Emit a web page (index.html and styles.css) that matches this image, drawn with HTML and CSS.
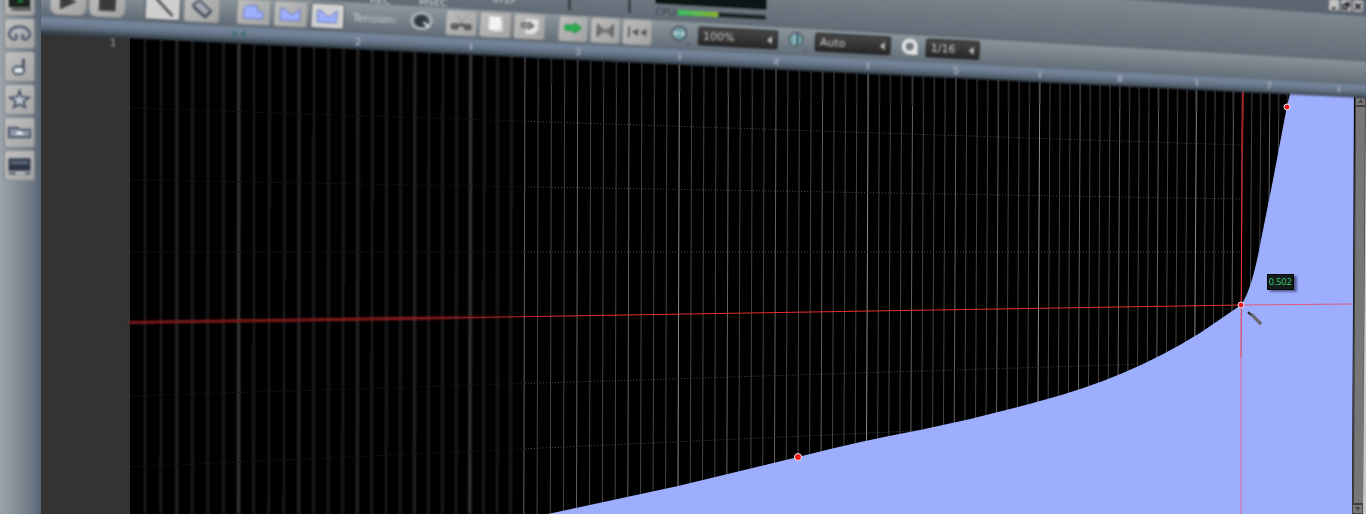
FILE: index.html
```html
<!DOCTYPE html>
<html lang="en">
<head>
<meta charset="utf-8">
<title>Automation editor</title>
<link rel="stylesheet" href="styles.css">
</head>
<body>
<div class="app">
  <nav class="sidebar" aria-label="Editors">
    <button class="side-btn" aria-label="Wave"><svg viewBox="0 0 30 30"><rect x="4" y="6" width="22" height="16" fill="#1c221e"/><path d="M13 16h4v-3h3" stroke="#20903a" stroke-width="2" fill="none"/><path d="M7 24h20" stroke="#555" stroke-width="3"/></svg></button>
    <button class="side-btn" aria-label="Controller"><svg viewBox="0 0 30 30"><path d="M8 21C0 16 6 8 15 8s15 8 7 13c-4 1-6-3-2-5M8 21c4 1 6-3 2-5" fill="none" stroke="#5d6677" stroke-width="3"/><path d="M7 13q8-6 16 0" fill="none" stroke="#a9afbb"/></svg></button>
    <button class="side-btn" aria-label="Notes"><svg viewBox="0 0 30 30"><path d="M19 7v13" stroke="#4b5567" stroke-width="3"/><ellipse cx="14" cy="19" rx="6" ry="4" fill="#dde3ea" stroke="#4b5567" stroke-width="2"/></svg></button>
    <button class="side-btn" aria-label="Favourites"><svg viewBox="0 0 30 30"><path d="M15 6l2 6 8 1-6 4 2 6-6-3-6 3 2-6-6-4 8-1z" fill="#bdc5d0" stroke="#4b5567" stroke-width="2"/></svg></button>
    <button class="side-btn" aria-label="Folder"><svg viewBox="0 0 30 30"><path d="M4 10h9l2 2h11v8H4z" fill="#8c97a8" stroke="#4b5567" stroke-width="2"/><path d="M15 13l5 4H10z" fill="#f0f4f8"/></svg></button>
    <button class="side-btn" aria-label="Screen"><svg viewBox="0 0 30 30"><rect x="4" y="8" width="22" height="12" fill="#2c3442" stroke="#4b5567"/><path d="M6 10h18v4H6z" fill="#596579"/><path d="M4 23h22" stroke="#626b79" stroke-width="3"/><path d="M11 23h10" stroke="#c8cdd2" stroke-width="2"/></svg></button>
  </nav>
  <main class="editor">
    <svg class="scene" viewBox="41 0 1325 514" preserveAspectRatio="none" role="img" aria-label="Automation curve">
      <defs>
        <linearGradient id="gPanel" gradientUnits="userSpaceOnUse" x1="1100" y1="-2" x2="1097" y2="46"><stop offset="0" stop-color="#7d888f"/><stop offset="1" stop-color="#636c77"/></linearGradient>
        <linearGradient id="gTools" gradientUnits="userSpaceOnUse" x1="760" y1="27" x2="758.6" y2="53"><stop offset="0" stop-color="#8a959b"/><stop offset="1" stop-color="#626d78"/></linearGradient>
        <linearGradient id="gRuler" gradientUnits="userSpaceOnUse" x1="700" y1="50" x2="699.25" y2="65"><stop offset="0" stop-color="#75859c"/><stop offset=".4" stop-color="#708095"/><stop offset=".75" stop-color="#566473"/><stop offset="1" stop-color="#36414c"/></linearGradient>
        <linearGradient id="gCpu" x1="0" x2="1" y1="0" y2="0"><stop offset="0" stop-color="#35c364"/><stop offset="1" stop-color="#8db52f"/></linearGradient>
        <linearGradient id="gRed" gradientUnits="userSpaceOnUse" x1="130" y1="0" x2="530" y2="0"><stop offset="0" stop-color="#7e1a1a"/><stop offset=".7" stop-color="#8c1c1e"/><stop offset="1" stop-color="#8c1c1e" stop-opacity="0"/></linearGradient>
        <linearGradient id="gRedLine" gradientUnits="userSpaceOnUse" x1="380" y1="0" x2="560" y2="0"><stop offset="0" stop-color="#e82c2c" stop-opacity="0"/><stop offset="1" stop-color="#e82c2c"/></linearGradient>
        <filter id="soft" filterUnits="userSpaceOnUse" x="0" y="-20" width="1400" height="560"><feGaussianBlur stdDeviation="1"/></filter>
        <filter id="slight" filterUnits="userSpaceOnUse" x="0" y="-20" width="1400" height="560"><feGaussianBlur stdDeviation=".8"/></filter>
      </defs>
      <rect x="41" width="1325" height="514" fill="#000"/>
      <rect x="41" width="89" height="514" fill="#333"/>
      <g id="grid"></g>
      <path d="M548 514L678 486L798 457Q860 441 920 430Q980 418 1040 401Q1128 378 1200 333L1241 305Q1252 290 1261 240L1273 180L1287 106L1291 90H1354L1352 514z" fill="#9eaeff"/>
      <path d="M129 321L530 315L530 318L129 324z" fill="url(#gRed)" filter="url(#slight)"/>
      <path d="M380 319L1241 305" stroke="url(#gRedLine)"/>
      <path d="M1241 305L1352 304" stroke="#e0567c"/>
      <path d="M1243 90L1242 150" stroke="#a52329" stroke-width="2"/>
      <path d="M1242 150L1241 357" stroke="#f03030" stroke-width="1"/>
      <path d="M1241 357V514" stroke="#dc6a96"/>
      <g fill="#f01818" stroke="#e4e8ff" stroke-width="1"><circle cx="798" cy="457" r="3.500"/><circle cx="1241" cy="305" r="3"/><circle cx="1287" cy="107" r="3"/></g>
      <path d="M1248 312l3 3" stroke="#222" stroke-width="2"/><path d="M1251 314l10 10" stroke="#555" stroke-width="3"/><path d="M1252 315l8 8" stroke="#88887f" stroke-width="1"/>
      <g>
        <path d="M1355 96L1352 514H1366V96z" fill="#414141"/>
        <path d="M1356 107h9l-2 396h-9z" fill="#767676"/>
        <path d="M1356 98h9v7h-9zM1353 505h9v8h-9z" fill="#777"/>
        <path d="M1358 103h5l-2-4zM1355 507h5l-2 4z" fill="#444"/>
        <path d="M1366 96L1363 514H1366z" fill="#c8c8c8"/>
      </g>
      <g filter="url(#slight)">
        <path d="M20 -10H1386V99L41 34L20 33z" fill="url(#gRuler)"/>
        <path d="M20 -10H1386V86L41 17L20 16z" fill="url(#gTools)"/>
        <path d="M240 -4L1386 63V-20H240z" fill="url(#gPanel)"/>
        <path d="M1120 -1L1386 18V-10H1120z" fill="#5b6572"/>
        <path d="M568 -4h3v14h-3zM628 -4h3v17h-3z" fill="#343a42"/>
        <path d="M655 -4H767V8q0 2-3 2L658 4q-3 0-3-2z" fill="#111715"/>
        <path d="M677 10L766 15V20L677 15z" fill="#1f2628"/>
        <path d="M678 10L718 12V17L678 15z" fill="url(#gCpu)"/>
        <text class="lcd-label dark" x="655" y="15" transform="rotate(3 655 15)">CPU</text>
        <text class="lcd-label" x="370" y="3" transform="rotate(3 370 3)">REC</text>
        <text class="lcd-label" x="419" y="5" transform="rotate(3 419 5)">MSEC</text>
        <text class="lcd-label" x="492" y="2" transform="rotate(3 492 2)">STEP</text>
        <g class="ruler-label"><text x="113" y="46">1</text><text x="358" y="45">2</text><text x="578" y="55">3</text><text x="776" y="65">4</text><text x="956" y="74">5</text><text x="1120" y="82">6</text><text x="1269" y="89">7</text></g>
        <path d="M471 43v7M680 53v7M868 62v7M1040 71v7M1197 79v7M1339 86v6" stroke="#98a3b1" stroke-width="2"/>
        <path d="M232 31l4 3-4 3M246 31l-4 3 4 3" stroke="#2f6f62" stroke-width="2" fill="none"/>
      </g>
    </svg>
    <output class="value-tip">0.502</output>
    <div class="toolbar">
      <div class="group large">
        <button class="tool" aria-label="Play"><svg viewBox="0 0 30 26"><path d="M6 4l18 8L6 21z" fill="#3c3c3c"/></svg></button>
        <button class="tool" aria-label="Stop"><svg viewBox="0 0 30 26"><path d="M6 4h18v16H6z" fill="#3a3a3a"/></svg></button>
      </div>
      <div class="group draw">
        <button class="tool on" aria-label="Draw"><svg viewBox="0 0 30 26"><path d="M5 1l21 21" stroke="#555" stroke-width="3"/></svg></button>
        <button class="tool" aria-label="Erase"><svg viewBox="0 0 30 26"><path d="M5 9l7-6 13 11-6 7z" fill="#a0a7b0" stroke="#4c5260" stroke-width="2"/><path d="M6 11l13 10 6-6" stroke="#4c5260" stroke-width="3" fill="none"/></svg></button>
      </div>
      <div class="group shapes">
        <button class="tool" aria-label="Steps"><svg viewBox="0 0 30 26"><path d="M4 20V11l4-5h11v6h6v8z" fill="#9eaeff" stroke="#6377b5"/></svg></button>
        <button class="tool" aria-label="Linear"><svg viewBox="0 0 30 26"><path d="M4 20V7q5 0 8 4t6 2l7-6v13z" fill="#9eaeff" stroke="#6377b5"/></svg></button>
        <button class="tool on" aria-label="Smooth"><svg viewBox="0 0 30 26"><path d="M4 20V7q5 0 8 4t6 2l7-6v13z" fill="#9eaeff" stroke="#6377b5"/></svg></button>
      </div>
      <label class="tension" for="tension">Tension:</label>
      <button class="knob" id="tension" aria-label="Tension"><svg viewBox="0 0 24 20"><ellipse cx="12" cy="10" rx="10" ry="8" fill="#7a848c" stroke="#b4bbc0" stroke-width="2"/><ellipse cx="12" cy="10" rx="7" ry="6" fill="#303841"/><path d="M14 11l6 5" stroke="#e8e8e8" stroke-width="2"/></svg></button>
      <div class="group edit">
        <button class="tool" aria-label="Cut"><svg viewBox="0 0 30 26"><path d="M8 4l12 12M22 4L10 16" stroke="#8b8b8b" stroke-width="1"/><g fill="none" stroke="#555" stroke-width="3"><ellipse cx="8" cy="17" rx="3" ry="2"/><ellipse cx="22" cy="17" rx="3" ry="2"/></g><path d="M12 15h6" stroke="#555" stroke-width="3"/></svg></button>
        <button class="tool" aria-label="Copy"><svg viewBox="0 0 30 26"><path d="M11 8h13v12q-4 2-11 1z" fill="#d0d0d0" stroke="#aaa"/><path d="M8 4h13v13l-4 2H8z" fill="#f3f3f3"/></svg></button>
        <button class="tool" aria-label="Paste"><svg viewBox="0 0 30 26"><path d="M11 5h14v11l-5 5h-9z" fill="#e2e2e2"/><path d="M6 9h8V7l7 5-7 5v-2H6z" fill="#666"/><path d="M8 12h8" stroke="#aaa" stroke-width="2"/></svg></button>
      </div>
      <div class="group nav">
        <button class="tool" aria-label="Forward"><svg viewBox="0 0 30 26"><path d="M6 9h10V6l8 6-8 6v-3H6z" fill="#29ad50" stroke="#1f8f42"/></svg></button>
        <button class="tool" aria-label="Mirror"><svg viewBox="0 0 30 26"><path d="M7 7l8 5 8-5v12l-8-4-8 4z" fill="#757575"/><path d="M7 6v14M23 6v14" stroke="#555" stroke-width="2"/></svg></button>
        <button class="tool" aria-label="Rewind"><svg viewBox="0 0 30 26"><path d="M6 7v12" stroke="#555" stroke-width="2"/><path d="M16 9v8l-7-4zM25 9v8l-7-4z" fill="#555"/></svg></button>
      </div>
      <div class="zoom wide">
        <label for="zoomx" aria-label="Horizontal zoom"><svg viewBox="0 0 22 20"><circle cx="10" cy="9" r="7" fill="#73a0a8" stroke="#525c66" stroke-width="2"/><path d="M4 9h12M7 6L4 9l3 3M13 6l3 3-3 3" stroke="#dff0f0" fill="none"/><path d="M19 18l2 2" stroke="#4b535e" stroke-width="2"/></svg></label>
        <span class="drop"><select id="zoomx"><option>100%</option></select></span>
      </div>
      <div class="zoom mid">
        <label for="zoomy" aria-label="Vertical zoom"><svg viewBox="0 0 22 20"><circle cx="10" cy="9" r="7" fill="#73a0a8" stroke="#5e6871" stroke-width="2"/><path d="M11 3v12" stroke="#2f5660" stroke-width="2"/><path d="M9 4v10" stroke="#dff0f0"/><path d="M19 18l2 2" stroke="#4b535e" stroke-width="2"/></svg></label>
        <span class="drop"><select id="zoomy"><option>Auto</option></select></span>
      </div>
      <div class="zoom narrow">
        <label for="quant" aria-label="Quantization"><svg viewBox="0 0 22 20"><circle cx="11" cy="10" r="6" fill="#70767c" stroke="#e3e3e3" stroke-width="4"/><path d="M13 13h6v5h-6z" fill="#e3e3e3"/></svg></label>
        <span class="drop"><select id="quant"><option>1/16</option></select></span>
      </div>
    </div>
    <div class="window-buttons">
      <button aria-label="Minimize"><svg viewBox="0 0 10 10"><path d="M3 8h4" stroke="#333" stroke-width="2"/></svg></button>
      <button aria-label="Restore"><svg viewBox="0 0 10 10"><path d="M2 4h4v4H2zM4 2h4v4" stroke="#333" stroke-width="2" fill="none"/></svg></button>
      <button aria-label="Close"><svg viewBox="0 0 10 10"><path d="M2 2l6 6M8 2L2 8" stroke="#222" stroke-width="2"/></svg></button>
    </div>
  </main>
</div>
<script src="grid.js"></script>
</body>
</html>
```
FILE: styles.css
```css
* { box-sizing: border-box; }
body { margin: 0; font-family: "DejaVu Sans", sans-serif; background: #000; overflow: hidden; }
button { padding: 0; border: 0; font: inherit; }
svg { display: block; }

.app { display: flex; height: 100vh; }
.sidebar {
  flex: 0 0 41px;
  display: flex; flex-direction: column; align-items: center; gap: 2px;
  margin-top: -15px; padding-right: 2px;
  background: linear-gradient(90deg, #9ba3ab, #8a959b 30%, #6f7885 75%, #566474);
}
.side-btn {
  flex: 0 0 31px; width: 31px;
  border: 1px solid #7f8387; border-radius: 3px;
  background: linear-gradient(135deg, #c0c0c0, #a3a3a3);
  filter: blur(1px);
}
.side-btn svg { width: 100%; }

.editor { flex: 1; min-width: 0; display: grid; grid-template-rows: 100vh; grid-template-columns: minmax(0, 1fr); overflow: hidden; }
.editor > * { grid-area: 1 / 1; }
.scene { width: 100%; height: 100%; }
.scene text { font-family: "DejaVu Sans", sans-serif; }
.lcd-label { font-size: 10px; fill: #c4cacf; }
.lcd-label.dark { fill: #343b43; }
.ruler-label { font-size: 9px; fill: #b4bbc5; text-anchor: middle; }

.toolbar {
  align-self: start; justify-self: start;
  display: flex; align-items: center;
  height: 32px; margin-top: -15px; padding-left: 9px;
  transform: rotate(3deg); transform-origin: 0 50%;
  filter: blur(1.3px);
}
.group { display: flex; }
.tool { height: 26px; border: 1px solid #8b8d8f; border-radius: 3px; background: linear-gradient(135deg, #bdbdbd, #a2a2a2); }
.tool svg { width: 100%; height: 100%; }
.tool.on { background: #cfcfcf; border-color: #454b53; }
.large { gap: 2px; margin-right: 19px; }
.large .tool { width: 37px; border-radius: 8px; }
.draw { gap: 3px; margin-right: 17px; }
.draw .tool { width: 36px; }
.shapes { gap: 3px; margin-right: 8px; }
.shapes .tool { width: 34px; }
.tension { width: 57px; font-size: 11px; color: #c8cfd4; }
.knob { width: 24px; height: 20px; margin-right: 12px; background: none; }
.edit { gap: 2px; margin-right: 13px; }
.edit .tool { width: 32px; }
.nav { gap: 2px; margin-right: 17px; }
.nav .tool { width: 30px; }

.zoom { display: flex; align-items: center; gap: 7px; margin-right: 8px; }
.zoom label svg { width: 22px; height: 20px; }
.drop { position: relative; display: block; height: 19px; }
.drop::after {
  content: ""; position: absolute; right: 6px; top: 6px;
  border: 4px solid transparent; border-right: 5px solid #bdbdbd; border-left: 0;
}
.drop select {
  appearance: none; display: block; width: 100%; height: 19px; padding: 0 4px;
  border: 1px solid #24282c; border-radius: 2px;
  background: linear-gradient(#464646, #262626);
  color: #d0d0d0; font: 11px "DejaVu Sans", sans-serif;
}
.wide .drop { width: 80px; }
.mid .drop { width: 76px; }
.narrow { gap: 5px; }
.narrow .drop { width: 54px; }

.window-buttons {
  align-self: start; justify-self: end;
  display: flex; gap: 2px; padding-right: 3px;
  transform: rotate(3deg); filter: blur(1px);
}
.window-buttons button { width: 10px; height: 11px; background: #c2c2c2; border-radius: 1px; }
.window-buttons svg { width: 10px; height: 10px; }

.value-tip {
  position: relative; left: 92.5%; top: 53.3%;
  align-self: start; justify-self: start;
  padding: 0 1px; line-height: 14px;
  border: 1px solid #060808; background: #151b1a;
  box-shadow: 3px 2px 2px rgba(40, 45, 90, .6);
  color: #35d877; font-family: "Liberation Sans Narrow", "Open Sans", sans-serif; font-size: 9px;
}
```
FILE: grid.js
```javascript
const NS = "http://www.w3.org/2000/svg";
const grid = document.getElementById("grid");

function line(x1, y1, x2, y2, stroke, width, extra) {
  const el = document.createElementNS(NS, "path");
  el.setAttribute("d", `M${x1.toFixed(1)} ${y1.toFixed(1)}L${x2.toFixed(1)} ${y2.toFixed(1)}`);
  el.setAttribute("stroke", stroke);
  el.setAttribute("stroke-width", width);
  for (const key in extra) el.setAttribute(key, extra[key]);
  grid.appendChild(el);
}

// Perspective spacing: eight steps between neighbouring ruler marks.
for (let i = 2; i < 100; i++) {
  const k = i / 8;
  const x = (113 + 132.67 * k) / (1 + 0.02857 * k);
  const foot = x - (x - 130) * 0.0026;
  const top = 33 + (x - 41) * 0.049;
  const level = i % 16 === 8 ? 2 : i % 4 === 0 ? 1 : 0;
  if (x < 520) {
    line(x, top, foot, 514, ["#1a1a1a", "#272727", "#3a3a3a"][level], 3, { filter: "url(#soft)" });
  } else {
    const sharp = x < 1020 ? 75 + (x - 400) * 0.06 : top + 22;
    line(x, top, x, sharp, ["#222", "#333", "#484848"][level], 2, {});
    line(x, sharp, foot, 514, ["#444", "#646464", "#8c8c8c"][level], 1, {});
  }
}

// Level lines, left end to right end.
[[108, 145], [180, 199], [252, 252], [396, 361], [467, 416]].forEach(([a, b]) => {
  const mid = a + (b - a) * 0.356;
  line(130, a, 525, mid, "#131313", 1, { "stroke-dasharray": "2 1" });
  line(525, mid, 1240, b, "#4a4a4a", 1, { "stroke-dasharray": "1 2" });
});
```
